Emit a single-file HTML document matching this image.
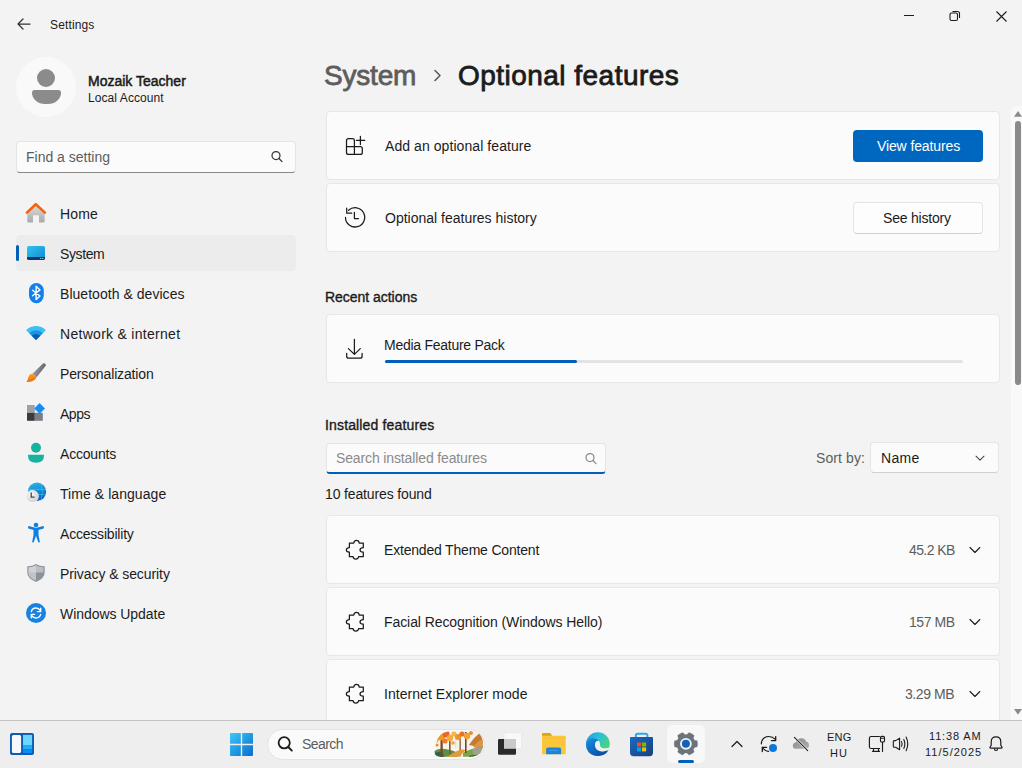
<!DOCTYPE html>
<html><head><meta charset="utf-8">
<style>
*{box-sizing:border-box;margin:0;padding:0}
html,body{width:1022px;height:768px;overflow:hidden;background:#f3f3f3;font-family:"Liberation Sans",sans-serif;color:#1b1b1b}
.a{position:absolute}
.t{position:absolute;white-space:nowrap;line-height:1;font-size:14px}
.card{position:absolute;left:326px;width:674px;height:69px;background:#fbfbfb;border:1px solid #e7e7e7;border-radius:4px}
.nav{position:absolute;left:60px;font-size:14px;line-height:1;white-space:nowrap;color:#1b1b1b}
svg{position:absolute;overflow:visible}
.k{fill:none;stroke:#1b1b1b;stroke-width:1.25;stroke-linecap:round;stroke-linejoin:round}
</style></head><body>

<!-- ===== title bar ===== -->
<svg style="left:17px;top:18px" width="14" height="12" viewBox="0 0 14 12"><path class="k" d="M6 1 L1 6 L6 11 M1 6 H13" style="stroke:#333"/></svg>
<div class="t" style="left:50px;top:19px;font-size:12px;letter-spacing:0.14px">Settings</div>

<svg style="left:904px;top:15px" width="11" height="2"><rect width="10" height="1" fill="#1b1b1b"/></svg>
<svg style="left:949px;top:10px" width="12" height="12" viewBox="0 0 12 12"><rect x="1" y="3" width="7.5" height="7.5" rx="1.5" fill="none" stroke="#1b1b1b" stroke-width="1.1"/><path d="M3.5 1.5 H8.5 Q10.5 1.5 10.5 3.5 V8" fill="none" stroke="#1b1b1b" stroke-width="1.1"/></svg>
<svg style="left:996px;top:11px" width="11" height="11" viewBox="0 0 11 11"><path d="M0.5 0.5 L10.5 10.5 M10.5 0.5 L0.5 10.5" stroke="#1b1b1b" stroke-width="1.1"/></svg>

<!-- ===== profile ===== -->
<div class="a" style="left:16px;top:57px;width:60px;height:60px;border-radius:50%;background:#f9f9f9"></div>
<div class="a" style="left:37px;top:69px;width:18px;height:18px;border-radius:50%;background:#8b8b8b"></div>
<div class="a" style="left:32px;top:90px;width:29px;height:14px;border-radius:3px 3px 14px 14px / 3px 3px 12px 12px;background:#8b8b8b"></div>
<div class="t" style="left:88px;top:74px;-webkit-text-stroke:0.5px #1b1b1b;letter-spacing:0px">Mozaik Teacher</div>
<div class="t" style="left:88px;top:92px;font-size:12px;letter-spacing:0.08px">Local Account</div>

<!-- ===== find a setting ===== -->
<div class="a" style="left:16px;top:141px;width:280px;height:32px;background:#fbfbfb;border:1px solid #e5e5e5;border-bottom:1px solid #878787;border-radius:4px"></div>
<div class="t" style="left:26px;top:150px;color:#5d5d5d">Find a setting</div>
<svg style="left:270px;top:150px" width="14" height="14" viewBox="0 0 14 14"><circle cx="6" cy="5.5" r="4" class="k" style="stroke:#333"/><path d="M9 8.5 L12 11.6" class="k" style="stroke:#333"/></svg>

<!-- ===== nav ===== -->
<div class="a" style="left:16px;top:235px;width:280px;height:36px;background:#ececec;border-radius:4px"></div>
<div class="a" style="left:16px;top:245px;width:3px;height:16px;background:#005fb8;border-radius:2px"></div>
<div class="nav" style="top:207px;letter-spacing:0.17px">Home</div>
<div class="nav" style="top:247px;letter-spacing:-0.4px">System</div>
<div class="nav" style="top:287px;letter-spacing:0.04px">Bluetooth &amp; devices</div>
<div class="nav" style="top:327px;letter-spacing:0.29px">Network &amp; internet</div>
<div class="nav" style="top:367px;letter-spacing:-0.14px">Personalization</div>
<div class="nav" style="top:407px;letter-spacing:-0.47px;left:60px">Apps</div>
<div class="nav" style="top:447px;letter-spacing:-0.2px;left:60px">Accounts</div>
<div class="nav" style="top:487px;letter-spacing:0.06px;left:60px">Time &amp; language</div>
<div class="nav" style="top:527px;letter-spacing:-0.2px;left:60px">Accessibility</div>
<div class="nav" style="top:567px;letter-spacing:-0.08px">Privacy &amp; security</div>
<div class="nav" style="top:607px;letter-spacing:-0.05px;left:60px">Windows Update</div>

<!-- Home -->
<svg style="left:26px;top:203px" width="20" height="20" viewBox="0 0 20 20">
<defs><linearGradient id="hg" x1="0" y1="0" x2="0" y2="1"><stop offset="0" stop-color="#dcdcdc"/><stop offset="1" stop-color="#a9a9a9"/></linearGradient></defs>
<path d="M1.3 9.5 L9.8 2.2 L18.6 9.5 V18.8 Q18.6 19.6 17.8 19.6 H13 V12.2 H7 V19.6 H2.1 Q1.3 19.6 1.3 18.8 Z" fill="url(#hg)"/>
<path d="M0.9 9.6 L9.8 1.2 L18.9 9.6" fill="none" stroke="#f7630c" stroke-width="2.6" stroke-linecap="round" stroke-linejoin="round"/>
</svg>
<!-- System -->
<svg style="left:27px;top:246px" width="18" height="14" viewBox="0 0 18 14">
<defs><linearGradient id="sg" x1="0" y1="0" x2="1" y2="1"><stop offset="0" stop-color="#2ec3ec"/><stop offset="1" stop-color="#1588d6"/></linearGradient></defs>
<rect x="0" y="0" width="18" height="14" rx="1.8" fill="url(#sg)"/>
<path d="M0 11 H18 V12.2 Q18 14 16.2 14 H1.8 Q0 14 0 12.2 Z" fill="#0d3a66"/>
<rect x="13.2" y="12" width="1.2" height="1" fill="#9fd4ef"/><rect x="15.2" y="12" width="1.2" height="1" fill="#9fd4ef"/>
</svg>
<!-- Bluetooth -->
<svg style="left:28.5px;top:283px" width="15" height="20" viewBox="0 0 15 20">
<rect x="0" y="0" width="14.8" height="20.2" rx="7.4" ry="7.6" fill="#0f7ff0"/>
<path d="M3.6 7.3 L11 13 L7.1 16.6 V3.2 L11 6.9 L3.6 12.7" fill="none" stroke="#fff" stroke-width="1.4" stroke-linecap="round" stroke-linejoin="round"/>
</svg>
<!-- Network -->
<svg style="left:26px;top:326px" width="20" height="14" viewBox="0 0 20 14">
<defs><clipPath id="wc"><path d="M10 14 L0 4.1 A14 14 0 0 1 20 4.1 Z"/></clipPath></defs>
<g clip-path="url(#wc)"><circle cx="10" cy="14" r="14.2" fill="#3ac2f2"/><circle cx="10" cy="14" r="9.7" fill="#1993e3"/><circle cx="10" cy="14" r="6" fill="#0b5bb5"/></g>
</svg>
<!-- Personalization -->
<svg style="left:26px;top:363px" width="20" height="20" viewBox="0 0 20 20">
<defs><linearGradient id="pg1" x1="0" y1="0" x2="1" y2="0.3"><stop offset="0" stop-color="#a9aeb3"/><stop offset="1" stop-color="#5d636a"/></linearGradient>
<linearGradient id="pg2" x1="0" y1="0" x2="0.3" y2="1"><stop offset="0" stop-color="#fbb02a"/><stop offset="1" stop-color="#f26a0c"/></linearGradient></defs>
<path d="M16.9 0.5 Q19.6 -0.6 19.9 2.6 L10.6 14.2 L6.4 10.8 Z" fill="url(#pg1)"/>
<path d="M6.4 10.8 Q3.4 10.4 2.6 13.6 Q2.1 16.6 0.5 18.9 Q5.6 19.3 8.4 16.9 Q10.2 15.5 10.6 14.2 Z" fill="url(#pg2)"/>
</svg>
<!-- Apps -->
<svg style="left:27px;top:403px" width="20" height="20" viewBox="0 0 20 20">
<rect x="0" y="2" width="7.8" height="7.8" fill="#9ea2a6"/>
<rect x="0" y="9.8" width="7.8" height="8" fill="#3b3b3b"/>
<rect x="7.8" y="9.8" width="8" height="8" fill="#7b7f84"/>
<path d="M12.6 0 L18 5.4 L12.6 10.8 L7.2 5.4 Z" fill="#1a8cf0"/>
</svg>
<!-- Accounts -->
<svg style="left:27px;top:442px" width="18" height="21" viewBox="0 0 18 21">
<circle cx="9" cy="5.8" r="5" fill="#18b2a0"/>
<path d="M1 12.8 H17 V13.6 Q17 20.8 9 20.8 Q1 20.8 1 13.6 Z" fill="#18b2a0"/>
</svg>
<!-- Time -->
<svg style="left:26px;top:482px" width="21" height="21" viewBox="0 0 21 21">
<defs><linearGradient id="gg" x1="0" y1="0" x2="0.3" y2="1"><stop offset="0" stop-color="#28c0ea"/><stop offset="1" stop-color="#0a5fc4"/></linearGradient>
<radialGradient id="cg" cx="0.4" cy="0.35" r="0.7"><stop offset="0" stop-color="#fafafa"/><stop offset="1" stop-color="#cfcfcf"/></radialGradient></defs>
<circle cx="11" cy="9.8" r="9.2" fill="url(#gg)"/>
<path d="M2 7.5 H20 M2 12.5 H20 M15 1.5 Q18 10 15 18.5" fill="none" stroke="#45d0f5" stroke-width="0.8" opacity="0.7"/>
<circle cx="6.3" cy="14.3" r="6.4" fill="#fff" opacity="0.9"/>
<circle cx="6.3" cy="14.3" r="5.9" fill="url(#cg)"/>
<path d="M5.2 10.5 V15.2 H8.6" fill="none" stroke="#444" stroke-width="1.3"/>
</svg>
<!-- Accessibility -->
<svg style="left:28px;top:522px" width="16" height="21" viewBox="0 0 16 21">
<circle cx="8" cy="3" r="2.3" fill="#0f7fe0"/>
<path d="M1.3 5.4 L8 7.2 L14.7 5.4" fill="none" stroke="#0f7fe0" stroke-width="2.6" stroke-linecap="round" stroke-linejoin="round"/>
<path d="M5.5 6.5 H10.5 V13 L11.8 19.6 Q12 20.6 11 20.6 H10.4 L8 14 L5.6 20.6 H5 Q4 20.6 4.2 19.6 L5.5 13 Z" fill="#0f7fe0"/>
</svg>
<!-- Privacy -->
<svg style="left:27px;top:564px" width="18" height="18" viewBox="0 0 18 18">
<defs><linearGradient id="shg" x1="0" y1="0" x2="1" y2="1"><stop offset="0" stop-color="#c9ced3"/><stop offset="1" stop-color="#8f959b"/></linearGradient></defs>
<path d="M0.3 2.2 Q5 2.4 9 0 Q13 2.4 17.7 2.2 V8.6 Q17.7 14.6 9 18 Q0.3 14.6 0.3 8.6 Z" fill="#8d9298"/>
<path d="M1.5 3.2 Q5.5 3.3 9 1.3 V16.6 Q1.5 13.6 1.5 8.6 Z" fill="#cfd3d8"/>
<path d="M9 1.3 Q12.5 3.3 16.5 3.2 V8.5 H9 Z" fill="#b9bec4"/>
<path d="M1.5 8.6 H9 V16.6 Q1.5 13.6 1.5 8.6 Z" fill="#bfc4c9"/>
</svg>
<!-- Windows Update -->
<svg style="left:26px;top:603px" width="20" height="20" viewBox="0 0 20 20">
<circle cx="10" cy="10" r="10" fill="#1583e2"/>
<path d="M5.3 8.6 Q6.3 5 10 5 Q12.6 5 14.2 7.4" fill="none" stroke="#fff" stroke-width="1.4" stroke-linecap="round"/>
<path d="M14.7 5.3 V8.6 H11.4" fill="none" stroke="#fff" stroke-width="1.4" stroke-linecap="round" stroke-linejoin="round"/>
<path d="M14.7 11.4 Q13.7 15 10 15 Q7.4 15 5.8 12.6" fill="none" stroke="#fff" stroke-width="1.4" stroke-linecap="round"/>
<path d="M5.3 14.7 V11.4 H8.6" fill="none" stroke="#fff" stroke-width="1.4" stroke-linecap="round" stroke-linejoin="round"/>
</svg>


<!-- ===== header ===== -->
<div class="t" style="left:324px;top:62px;font-size:28px;color:#5d5d5d;-webkit-text-stroke:0.8px #5d5d5d;letter-spacing:-0.2px">System</div>
<svg style="left:433px;top:69px" width="9" height="13" viewBox="0 0 9 13"><path d="M2 1.5 L7 6.5 L2 11.5" fill="none" stroke="#5d5d5d" stroke-width="1.6" stroke-linecap="round" stroke-linejoin="round"/></svg>
<div class="t" style="left:458px;top:62px;font-size:28px;-webkit-text-stroke:0.8px #1b1b1b;letter-spacing:0.47px">Optional features</div>

<!-- ===== cards ===== -->
<div class="card" style="top:111px"></div>
<div class="t" style="left:385px;top:139px;letter-spacing:0.07px">Add an optional feature</div>
<div class="a" style="left:853px;top:130px;width:130px;height:32px;background:#0067c0;border-radius:4px"></div>
<div class="t" style="left:877px;top:139px;color:#fff;letter-spacing:-0.12px">View features</div>

<div class="card" style="top:183px"></div>
<div class="t" style="left:385px;top:211px">Optional features history</div>
<div class="a" style="left:853px;top:202px;width:130px;height:32px;background:#fdfdfd;border:1px solid #e5e5e5;border-bottom-color:#d0d0d0;border-radius:4px"></div>
<div class="t" style="left:883px;top:211px;letter-spacing:-0.2px">See history</div>

<div class="t" style="left:325px;top:290px;-webkit-text-stroke:0.35px #1b1b1b;letter-spacing:-0.03px">Recent actions</div>
<div class="card" style="top:314px"></div>
<div class="t" style="left:384px;top:338px;letter-spacing:-0.26px">Media Feature Pack</div>
<div class="a" style="left:385px;top:360px;width:578px;height:3px;background:#e3e3e3;border-radius:2px"></div>
<div class="a" style="left:385px;top:360px;width:192px;height:3px;background:#005fb8;border-radius:2px"></div>

<div class="t" style="left:325px;top:418px;-webkit-text-stroke:0.35px #1b1b1b;letter-spacing:0.15px">Installed features</div>
<div class="a" style="left:326px;top:443px;width:280px;height:31px;background:#fbfbfb;border:1px solid #e5e5e5;border-bottom:2px solid #005fb8;border-radius:4px"></div>
<div class="t" style="left:336px;top:451px;color:#8a8a8a;letter-spacing:-0.13px">Search installed features</div>
<svg style="left:584px;top:452px" width="14" height="14" viewBox="0 0 14 14"><circle cx="6" cy="5.5" r="4" class="k" style="stroke:#8a8a8a"/><path d="M9 8.5 L12 11.6" class="k" style="stroke:#8a8a8a"/></svg>
<div class="t" style="left:325px;top:487px;letter-spacing:-0.14px">10 features found</div>
<div class="t" style="left:816px;top:451px;color:#5d5d5d;letter-spacing:0.09px">Sort by:</div>
<div class="a" style="left:870px;top:442px;width:129px;height:31px;background:#fbfbfb;border:1px solid #e5e5e5;border-bottom-color:#d0d0d0;border-radius:4px"></div>
<div class="t" style="left:881px;top:451px;letter-spacing:0.3px">Name</div>
<svg style="left:975px;top:455px" width="10" height="7" viewBox="0 0 10 7"><path d="M1 1.2 L5 5.2 L9 1.2" class="k" style="stroke:#444;stroke-width:1.05"/></svg>

<div class="card" style="top:515px;height:69px"></div>
<div class="t" style="left:384px;top:543px;letter-spacing:-0.19px">Extended Theme Content</div>
<div class="t" style="left:909px;top:543px;color:#5d5d5d;letter-spacing:-0.6px">45.2 KB</div>
<div class="card" style="top:587px;height:69px"></div>
<div class="t" style="left:384px;top:615px;letter-spacing:-0.08px">Facial Recognition (Windows Hello)</div>
<div class="t" style="left:909px;top:615px;color:#5d5d5d;letter-spacing:-0.44px">157 MB</div>
<div class="card" style="top:659px;height:69px"></div>
<div class="t" style="left:384px;top:687px;letter-spacing:0.05px">Internet Explorer mode</div>
<div class="t" style="left:905px;top:687px;color:#5d5d5d;letter-spacing:-0.42px">3.29 MB</div>

<!-- add feature -->
<svg style="left:340px;top:130px" width="32" height="32" viewBox="0 0 32 32">
<path class="k" d="M6.5 16.5 V10.5 Q6.5 8.5 8.5 8.5 H12.5 Q14.4 8.5 14.4 10.5 V24.4 M6.5 16.5 H20.3 Q22.3 16.5 22.3 18.5 V22.4 Q22.3 24.4 20.3 24.4 H8.5 Q6.5 24.4 6.5 22.4 Z"/>
<path class="k" d="M20.4 6.3 V14.5 M16.4 10.3 H24.8"/>
</svg>
<!-- history -->
<svg style="left:340px;top:202px" width="32" height="32" viewBox="0 0 32 32">
<path class="k" d="M8.6 8.3 A9.6 9.6 0 1 1 5.5 15.4"/>
<path class="k" d="M6.7 6.2 V11.2 H11.7"/>
<path class="k" d="M14.4 10.3 V16.6 H18.4"/>
</svg>
<!-- download -->
<svg style="left:340px;top:333px" width="32" height="32" viewBox="0 0 32 32">
<path class="k" d="M14.4 6.3 V21 M8.4 15.6 L14.4 21.4 L20.3 15.6"/>
<path class="k" d="M6.7 20.3 V23.2 Q6.7 25.2 8.7 25.2 H20.1 Q22.1 25.2 22.1 23.2 V20.3"/>
</svg>
<svg style="left:340px;top:534px" width="32" height="32" viewBox="0 0 32 32"><path class="k" d="M9.4 9 H13.8 Q14.2 6.3 16.5 6.3 Q18.8 6.3 19.2 9 H23.3 V13.6 Q20 13.9 20 15.9 Q20 17.9 23.3 18.2 V22.7 H18.6 Q18.2 25.2 15.8 25.2 Q13.4 25.2 13 22.7 H9.4 V18.2 Q6.3 17.8 6.3 15.9 Q6.3 14 9.4 13.6 Z"/>
<path class="k" d="M4.4 5 L9.8 10.3 L15 5" style="display:none"/>
</svg>
<svg style="left:960px;top:536px" width="32" height="32" viewBox="0 0 32 32"><path class="k" d="M10 11.5 L15 16.5 L19.8 11.5" style="stroke-width:1.1"/></svg>
<svg style="left:340px;top:606px" width="32" height="32" viewBox="0 0 32 32"><path class="k" d="M9.4 9 H13.8 Q14.2 6.3 16.5 6.3 Q18.8 6.3 19.2 9 H23.3 V13.6 Q20 13.9 20 15.9 Q20 17.9 23.3 18.2 V22.7 H18.6 Q18.2 25.2 15.8 25.2 Q13.4 25.2 13 22.7 H9.4 V18.2 Q6.3 17.8 6.3 15.9 Q6.3 14 9.4 13.6 Z"/>
<path class="k" d="M4.4 5 L9.8 10.3 L15 5" style="display:none"/>
</svg>
<svg style="left:960px;top:608px" width="32" height="32" viewBox="0 0 32 32"><path class="k" d="M10 11.5 L15 16.5 L19.8 11.5" style="stroke-width:1.1"/></svg>
<svg style="left:340px;top:678px" width="32" height="32" viewBox="0 0 32 32"><path class="k" d="M9.4 9 H13.8 Q14.2 6.3 16.5 6.3 Q18.8 6.3 19.2 9 H23.3 V13.6 Q20 13.9 20 15.9 Q20 17.9 23.3 18.2 V22.7 H18.6 Q18.2 25.2 15.8 25.2 Q13.4 25.2 13 22.7 H9.4 V18.2 Q6.3 17.8 6.3 15.9 Q6.3 14 9.4 13.6 Z"/>
<path class="k" d="M4.4 5 L9.8 10.3 L15 5" style="display:none"/>
</svg>
<svg style="left:960px;top:680px" width="32" height="32" viewBox="0 0 32 32"><path class="k" d="M10 11.5 L15 16.5 L19.8 11.5" style="stroke-width:1.1"/></svg>


<!-- scrollbar -->
<div class="a" style="left:1011px;top:106px;width:11px;height:614px;background:#f9f9f9;border-radius:6px 0 0 0"></div>
<svg style="left:1014px;top:111px" width="8" height="6" viewBox="0 0 8 6"><path d="M4 0 L8 5.7 L0 5.7 Z" fill="#8a8a8a"/></svg>
<div class="a" style="left:1015px;top:121px;width:6px;height:264px;background:#8a8a8a;border-radius:3px"></div>
<svg style="left:1014px;top:709px" width="8" height="6" viewBox="0 0 8 6"><path d="M0 0 H8 L4 5.7 Z" fill="#8a8a8a"/></svg>

<!-- ===== taskbar ===== -->
<div class="a" style="left:0;top:720px;width:1022px;height:48px;background:#eeeeee;border-top:1px solid #c4c4c4"></div>
<div class="a" style="left:267px;top:729px;width:218px;height:31px;border-radius:16px;background:#fafafa;border:1px solid #e3e3e3"></div>
<div class="t" style="left:302px;top:737px;color:#5d5d5d;letter-spacing:-0.58px">Search</div>
<div class="a" style="left:667px;top:725px;width:38px;height:38px;border-radius:5px;background:#f8f8f8"></div>
<div class="a" style="left:678px;top:760px;width:16px;height:3px;border-radius:2px;background:#005fb8"></div>
<div class="t" style="left:827px;top:732px;font-size:11px;letter-spacing:0.25px">ENG</div>
<div class="t" style="left:830px;top:748px;font-size:11px;letter-spacing:1.1px">HU</div>
<div class="t" style="left:929px;top:731px;font-size:11px;letter-spacing:0.84px">11:38 AM</div>
<div class="t" style="left:925px;top:747px;font-size:11px;letter-spacing:1.01px">11/5/2025</div>

<!-- widgets -->
<svg style="left:10px;top:733px" width="24" height="22" viewBox="0 0 24 22">
<rect x="0" y="0" width="24" height="22" rx="2" fill="#0a5cb4"/>
<rect x="1.9" y="1.9" width="9.2" height="18.1" rx="1.6" fill="#f8f8f8"/>
<rect x="13" y="1.9" width="9.1" height="10.2" fill="#6cd6ff"/>
<rect x="13" y="12.1" width="9.1" height="4.2" fill="#20aef5"/>
<rect x="13" y="16.3" width="9.1" height="3.7" fill="#0b8cf0"/>
</svg>
<!-- start -->
<svg style="left:230px;top:733px" width="23" height="23" viewBox="0 0 23 23">
<defs><linearGradient id="wl" x1="0" y1="0" x2="1" y2="1"><stop offset="0" stop-color="#3cc8f6"/><stop offset="1" stop-color="#0a6ccf"/></linearGradient></defs>
<path d="M0 1 Q0 0 1 0 H10.8 V10.8 H0 Z M12.2 0 H22 Q23 0 23 1 V10.8 H12.2 Z M0 12.2 H10.8 V23 H1 Q0 23 0 22 Z M12.2 12.2 H23 V22 Q23 23 22 23 H12.2 Z" fill="url(#wl)"/>
</svg>
<!-- search icon -->
<svg style="left:277px;top:736px" width="16" height="16" viewBox="0 0 16 16">
<circle cx="7.2" cy="6.8" r="5.6" fill="none" stroke="#1b1b1b" stroke-width="1.8"/>
<path d="M11.3 11 L14.8 14.6" stroke="#1b1b1b" stroke-width="1.9" stroke-linecap="round"/>
</svg>
<!-- autumn -->
<svg style="left:433px;top:730px" width="51" height="28" viewBox="0 0 51 28">
<defs><clipPath id="ac"><path d="M5 8 Q9 1 20 1 H37 Q49.8 1 49.8 13.8 Q49.8 26.7 37 26.7 H8 Q1 26.7 1.5 21 Q2 14 5 8 Z"/></clipPath></defs>
<g clip-path="url(#ac)">
<rect x="0" y="0" width="51" height="28" fill="#f7f3ee"/>
<path d="M36 15 Q42 6 47 3 L51 2 V18 Z" fill="#c47a30"/>
<path d="M40 17 Q45 10 51 9 V20 Z" fill="#d99548"/>
<path d="M0 22 Q5 18 12 19 Q20 20 25 23 V28 H0 Z" fill="#5f8f45"/>
<path d="M0 24 Q4 21 9 22 L12 28 H0 Z" fill="#2d6552"/>
<path d="M30 23 Q38 18 51 16 V28 H30 Z" fill="#7aa54a"/>
<path d="M39 20 Q44 17 51 17 V28 H42 Z" fill="#a49f8e"/>
<path d="M12 28 Q20 23 26 20 Q30 19 33 20 Q28 24 27 28 Z" fill="#e39a3e"/>
<path d="M36 26 Q42 24 51 25 V28 H36 Z" fill="#2f6a4a"/>
<rect x="7.5" y="8" width="2.2" height="20" fill="#7a461c"/>
<rect x="16" y="10" width="1.6" height="14" fill="#8a5526"/>
<rect x="22" y="4" width="1.2" height="14" fill="#e0e0e0"/>
<rect x="26.5" y="4" width="1.3" height="16" fill="#8a5526"/>
<rect x="32" y="2" width="1.6" height="21" fill="#7a461c"/>
<circle cx="3" cy="10" r="2.5" fill="#f4a126"/>
<circle cx="8" cy="6" r="4.5" fill="#f09a22"/>
<circle cx="13" cy="4" r="3.5" fill="#e8662a"/>
<circle cx="17" cy="8" r="3.2" fill="#f4ae34"/>
<circle cx="12" cy="11" r="2.6" fill="#ef7d22"/>
<circle cx="21" cy="4" r="2.6" fill="#f6b845"/>
<circle cx="25" cy="7" r="3" fill="#f29226"/>
<circle cx="29" cy="4" r="2.6" fill="#e9702c"/>
<circle cx="34" cy="6" r="3.2" fill="#f2a030"/>
<circle cx="38" cy="3" r="2" fill="#ef8a2a"/>
<circle cx="20" cy="13" r="1.8" fill="#f1a140"/>
<circle cx="4" cy="15" r="1.5" fill="#ef8a2a"/>
</g>
</svg>
<!-- task view -->
<svg style="left:498px;top:732px" width="24" height="23" viewBox="0 0 24 23">
<rect x="6" y="0.8" width="17.5" height="16" rx="1.2" fill="#f9f9f9" stroke="#e2e2e2" stroke-width="0.6"/>
<rect x="0" y="7" width="18" height="15.7" rx="1.2" fill="#2a2a2a"/>
<rect x="6" y="7" width="12" height="9.8" fill="#c9c9c9"/>
</svg>
<!-- explorer -->
<svg style="left:542px;top:733px" width="24" height="22" viewBox="0 0 24 22">
<path d="M0 1 Q0 0 1 0 H8.3 L10 2.4 V5.5 H0 Z" fill="#e2a312"/>
<rect x="0" y="2.7" width="23.7" height="18.6" rx="0.6" fill="#fcc63c"/>
<path d="M0 4.8 H23.7" stroke="#f6b820" stroke-width="0.5"/>
<path d="M4.1 21.3 V16.4 Q4.1 14.4 6.1 14.4 H17.1 Q19.1 14.4 19.1 16.4 V21.3 Z" fill="#1a83d8"/>
<rect x="7" y="16.8" width="9" height="1.2" fill="#4aa8ec" opacity="0.6"/>
</svg>
<!-- edge -->
<svg style="left:586px;top:731.7px" width="24" height="25" viewBox="0 0 24 25">
<defs>
<linearGradient id="eg1" x1="0" y1="0" x2="1" y2="0.6"><stop offset="0" stop-color="#1b9de6"/><stop offset="0.5" stop-color="#2cc0d8"/><stop offset="1" stop-color="#52d869"/></linearGradient>
<linearGradient id="eg2" x1="0" y1="0" x2="0.8" y2="1"><stop offset="0" stop-color="#1b8ee3"/><stop offset="1" stop-color="#0a4aa0"/></linearGradient>
</defs>
<circle cx="11.9" cy="12.1" r="11.9" fill="url(#eg1)"/>
<path d="M0.05 11.6 Q0.8 7 6 6.3 Q10.5 5.8 13 8.9 Q10.2 8.6 9.2 11 Q8.2 14.5 11 17.8 Q15.5 21 22.6 18.1 Q19.3 24 11.9 24 Q3.5 24 0.6 16.5 Q0 14 0.05 11.6 Z" fill="url(#eg2)"/>
<path d="M13 8.9 Q10.2 8.6 9.2 11 Q8.2 14.5 11 17.8 Q15.5 21 22.6 18.1 L23.5 15.6 Q19.5 16.9 15.6 15.7 Q13.6 14.4 13.9 11.8 Q14.1 10 13 8.9 Z" fill="#efefef"/>
</svg>
<!-- store -->
<svg style="left:630px;top:732.5px" width="24" height="24" viewBox="0 0 24 24">
<defs><linearGradient id="stg" x1="0" y1="0" x2="1" y2="1"><stop offset="0" stop-color="#1b6ac2"/><stop offset="1" stop-color="#163f7f"/></linearGradient></defs>
<path d="M5.8 5 V2.5 Q5.8 0.7 7.6 0.7 H15.6 Q17.4 0.7 17.4 2.5 V5" fill="none" stroke="#2aa6ea" stroke-width="1.9"/>
<path d="M0 4.8 Q0 4.1 0.8 4.1 H22.2 Q23 4.1 23 4.8 V19.5 Q23 23.2 19.5 23.2 H3.5 Q0 23.2 0 19.5 Z" fill="url(#stg)"/>
<rect x="7" y="9.5" width="4.1" height="4" fill="#f25022"/>
<rect x="12" y="9.5" width="4.1" height="4" fill="#7fba00"/>
<rect x="7" y="14.4" width="4.1" height="4" fill="#00a4ef"/>
<rect x="12" y="14.4" width="4.1" height="4" fill="#ffb900"/>
</svg>
<!-- settings gear -->
<svg style="left:674px;top:732px" width="24" height="24" viewBox="0 0 24 24">
<g transform="translate(11.9 11.8)">
<path fill="#6b737c" stroke="#6b737c" stroke-width="0.3" stroke-linejoin="round" d="M8.56 -3.63 L11.30 -3.03 A11.7 11.7 0 0 1 11.30 3.03 L8.56 3.63 A9.3 9.3 0 0 1 7.43 5.60 L7.43 5.60 L8.27 8.27 A11.7 11.7 0 0 1 3.03 11.30 L1.13 9.23 A9.3 9.3 0 0 1 -1.13 9.23 L-1.13 9.23 L-3.03 11.30 A11.7 11.7 0 0 1 -8.27 8.27 L-7.43 5.60 A9.3 9.3 0 0 1 -8.56 3.63 L-8.56 3.63 L-11.30 3.03 A11.7 11.7 0 0 1 -11.30 -3.03 L-8.56 -3.63 A9.3 9.3 0 0 1 -7.43 -5.60 L-7.43 -5.60 L-8.27 -8.27 A11.7 11.7 0 0 1 -3.03 -11.30 L-1.13 -9.23 A9.3 9.3 0 0 1 1.13 -9.23 L1.13 -9.23 L3.03 -11.30 A11.7 11.7 0 0 1 8.27 -8.27 L7.43 -5.60 A9.3 9.3 0 0 1 8.56 -3.63 Z"/>
<circle r="5.9" fill="#f4f4f4"/>
<circle r="4" fill="#1561b8"/>
</g>
</svg>
<!-- chevron up -->
<svg style="left:731px;top:740px" width="12" height="8" viewBox="0 0 12 8"><path d="M1 6.5 L6 1.5 L11 6.5" fill="none" stroke="#1b1b1b" stroke-width="1.2" stroke-linecap="round" stroke-linejoin="round"/></svg>
<!-- sync -->
<svg style="left:760px;top:735px" width="20" height="18" viewBox="0 0 20 18">
<path d="M1.3 8.8 Q1.8 2 8.4 1.5 Q12.6 1.4 15.3 4.3" fill="none" stroke="#1b1b1b" stroke-width="1.2" stroke-linecap="round"/>
<path d="M15.7 1.6 V5.6 H11.4" fill="none" stroke="#1b1b1b" stroke-width="1.3" stroke-linecap="round" stroke-linejoin="round"/>
<path d="M2.4 12.3 Q5 16.4 8.6 16.3" fill="none" stroke="#1b1b1b" stroke-width="1.2" stroke-linecap="round"/>
<path d="M2.3 16.6 V12.3 H6.6" fill="none" stroke="#1b1b1b" stroke-width="1.3" stroke-linecap="round" stroke-linejoin="round"/>
<circle cx="13" cy="12.9" r="4.4" fill="#f0f0f0"/>
<circle cx="13" cy="12.9" r="4" fill="#0a78d8"/>
</svg>
<!-- onedrive off -->
<svg style="left:792px;top:736px" width="18" height="16" viewBox="0 0 18 16">
<defs><linearGradient id="odg" x1="0" y1="0" x2="1" y2="1"><stop offset="0" stop-color="#8a8a8a"/><stop offset="1" stop-color="#b0b0b0"/></linearGradient></defs>
<path d="M3.5 12.8 Q0.8 12.8 0.8 9.8 Q0.8 7 3.8 6.6 Q5.2 2.2 9.5 2.2 Q12.8 2.2 14.2 5.4 Q17 5.8 17 9.2 Q17 12.8 13.6 12.8 Z" fill="url(#odg)"/>
<path d="M2.4 1.3 L15.7 14.6" stroke="#f0f0f0" stroke-width="2.4" stroke-linecap="round"/>
<path d="M2.4 1.3 L15.7 14.6" stroke="#1b1b1b" stroke-width="1.1" stroke-linecap="round"/>
</svg>
<!-- network -->
<svg style="left:868px;top:735px" width="18" height="18" viewBox="0 0 18 18">
<path d="M11.8 1.5 H3.2 Q1.4 1.5 1.4 3.3 V11.7 Q1.4 13.5 3.2 13.5 H12" fill="none" stroke="#1b1b1b" stroke-width="1.15"/>
<path d="M5.5 13.5 V16.3 M10.5 13.5 V16.3 M4.1 16.4 H12" fill="none" stroke="#1b1b1b" stroke-width="1.15"/>
<rect x="12.5" y="1.4" width="4" height="5.6" rx="1.3" fill="none" stroke="#1b1b1b" stroke-width="1.15"/>
<path d="M12.5 3.3 H16.5" stroke="#1b1b1b" stroke-width="0.9"/>
<path d="M14.5 7 V16.9" stroke="#1b1b1b" stroke-width="1.15"/>
</svg>
<!-- volume -->
<svg style="left:892px;top:736px" width="18" height="16" viewBox="0 0 18 16">
<path d="M1.3 5.6 Q1.3 4.6 2.3 4.6 H3.7 L7.6 2.1 V13.7 L3.7 11.2 H2.3 Q1.3 11.2 1.3 10.2 Z" fill="none" stroke="#1b1b1b" stroke-width="1.1" stroke-linejoin="round"/>
<path d="M9.6 5.6 Q10.6 7.9 9.6 10.2" fill="none" stroke="#1b1b1b" stroke-width="1.1" stroke-linecap="round"/>
<path d="M11.8 3.4 Q13.9 7.9 11.8 12.4" fill="none" stroke="#1b1b1b" stroke-width="1.1" stroke-linecap="round"/>
<path d="M14.1 1.1 Q17.4 7.9 14.1 14.7" fill="none" stroke="#1b1b1b" stroke-width="1.1" stroke-linecap="round"/>
</svg>
<!-- bell -->
<svg style="left:989px;top:736px" width="14" height="16" viewBox="0 0 14 16">
<path d="M2.2 9.3 V5.8 Q2.2 0.9 7 0.9 Q11.8 0.9 11.8 5.8 V9.3 L13 11.3 Q13.3 12.1 12.4 12.1 H1.6 Q0.7 12.1 1 11.3 Z" fill="none" stroke="#1b1b1b" stroke-width="1.2" stroke-linejoin="round"/>
<path d="M5.3 12.4 Q5.4 14.5 7 14.5 Q8.6 14.5 8.7 12.4" fill="none" stroke="#1b1b1b" stroke-width="1.1"/>
</svg>


</body></html>
